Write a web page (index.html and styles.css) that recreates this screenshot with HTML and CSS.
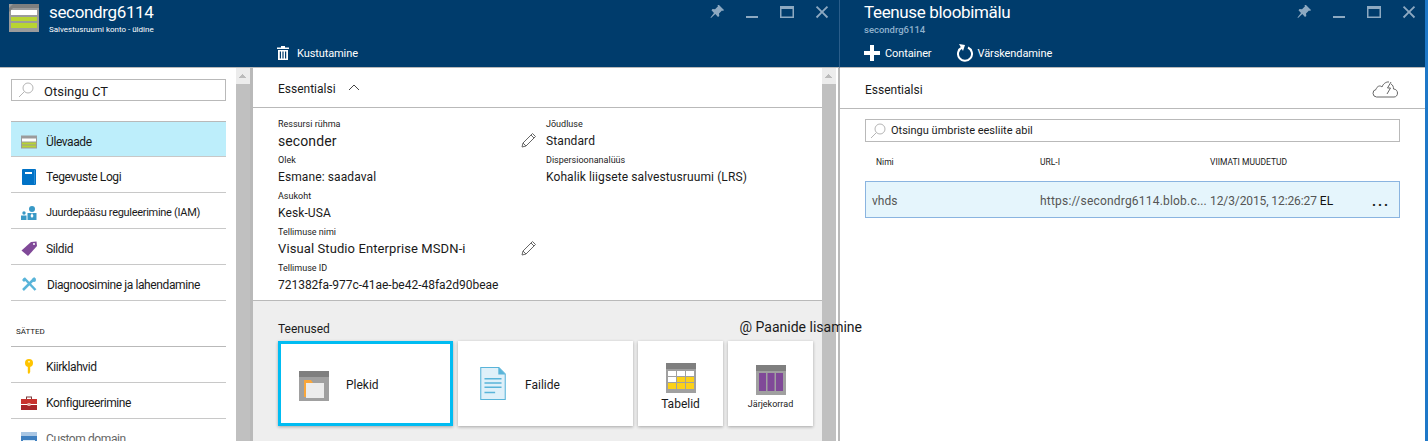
FILE: index.html
```html
<!DOCTYPE html>
<html lang="et">
<head>
    <meta charset="UTF-8">
    <title>secondrg6114</title>
    <link rel="stylesheet" href="styles.css">
</head>
<body>
<div class="portal">

    <!-- vasak paan: salvestusruumi konto -->
    <section class="blade blade-account">
        <header class="blade-header">
            <div class="title-row">
                <svg class="account-logo" viewBox="0 0 30 28">
                    <rect width="30" height="28" fill="#9b9b9b"/>
                    <path d="M30 0v4H4L0 8V4l4-4z" fill="#7f7f7f"/>
                    <rect x="2" y="6" width="26" height="5" fill="#fff"/>
                    <rect x="2" y="13" width="26" height="4" fill="#b8d432"/>
                    <rect x="2" y="19" width="26" height="5" fill="#b8d432"/>
                </svg>
                <div class="title-text">
                    <h1>secondrg6114</h1>
                    <div class="subtitle">Salvestusruumi konto - üldine</div>
                </div>
                <div class="window-icons">
                    <svg viewBox="0 0 14 14"><path d="M9 0l5 5-1 1-1-.5-3 3 .3 2.5-1.3 1-2.7-3L1 13l-.5-.5L4 8 1.500 5.300l1-1.300 2.500.3 3-3L7.500 0z"/></svg>
                    <svg viewBox="0 0 14 14"><rect x="1" y="11" width="12" height="2"/></svg>
                    <svg viewBox="0 0 14 14"><path d="M0 1h14v12H0zm1.500 3v7.500h11V4z" fill-rule="evenodd"/></svg>
                    <svg viewBox="-1 -1 16 16"><path d="M1.500 0L7 5.500 12.500 0 14 1.500 8.500 7l5.500 5.500-1.500 1.500L7 8.500 1.500 14 0 12.500 5.500 7 0 1.500z"/></svg>
                </div>
            </div>
            <div class="commands commands-account">
                <div class="command">
                    <svg class="icon-trash" viewBox="0 0 12 14"><path d="M4 0h4v1.500h4v1.500H0V1.500h4zM1 4h10v10H1zm1.800 1.500v7h1.200v-7zm2.600 0v7h1.200v-7zm2.600 0v7h1.200v-7z" fill-rule="evenodd"/></svg>
                    <span>Kustutamine</span>
                </div>
            </div>
        </header>
        <div class="blade-body">
            <nav class="side-menu">
                <div class="search-box search-menu">
                    <svg class="search-icon" viewBox="0 0 16 16"><circle cx="10" cy="6" r="5"/><path d="M6.500 9.500L1 15"/></svg>
                    <span>Otsingu CT</span>
                </div>
                <ul class="menu-list">
                    <li class="menu-item active">
                        <svg viewBox="0 0 16 13"><rect width="16" height="13" fill="#9b9b9b"/><rect x="1" y="3" width="14" height="3" fill="#fff"/><rect x="1" y="7" width="14" height="2" fill="#b8d432"/><rect x="1" y="10" width="14" height="2" fill="#b8d432"/></svg>
                        <span>Ülevaade</span>
                    </li>
                    <li class="menu-item">
                        <svg viewBox="0 0 16 16"><rect x="1" width="14" height="16" rx="1" fill="#0072c6"/><rect x="4" y="3" width="7" height="2" fill="#fff"/><rect x="13" y="1" width="1" height="14" fill="#2a8fd8"/></svg>
                        <span>Tegevuste Logi</span>
                    </li>
                    <li class="menu-item">
                        <svg viewBox="0 0 16 16"><circle cx="11" cy="4" r="3" fill="#3999c6"/><path d="M6.500 8h9v7h-9z" fill="#3999c6"/><circle cx="3" cy="8" r="1.700" fill="#3999c6"/><path d="M0 10.500h5.500V15H0z" fill="#3999c6"/><path d="M11 8l-1.500 3 1.500 2 1.500-2z" fill="#fff"/></svg>
                        <span class="menu-tight">Juurdepääsu reguleerimine (IAM)</span>
                    </li>
                    <li class="menu-item">
                        <svg viewBox="0 0 16 16"><path d="M10 1l5.500-.500L16 5 7 15 .500 9.500z" fill="#804998"/><circle cx="13" cy="3" r="1" fill="#fff"/></svg>
                        <span>Sildid</span>
                    </li>
                    <li class="menu-item">
                        <svg viewBox="0 0 16 16"><path d="M3 1l11.500 12" stroke="#59b4d9" stroke-width="2.500" fill="none"/><path d="M14 1L2 13" stroke="#59b4d9" stroke-width="2.500" fill="none"/><path d="M1 3l2-2 2 2-2 2z" fill="#59b4d9"/><circle cx="13" cy="3" r="2" fill="#59b4d9"/></svg>
                        <span class="menu-shift">Diagnoosimine ja lahendamine</span>
                    </li>
                </ul>
                <div class="menu-heading">SÄTTED</div>
                <ul class="menu-list">
                    <li class="menu-item">
                        <svg viewBox="0 0 16 16"><circle cx="8" cy="4" r="4" fill="#ffc400"/><path d="M6.800 7h2.400v6L8 15l-1.200-1z" fill="#ffc400"/><rect x="7" y="2" width="2" height="1.500" fill="#fff2a8"/></svg>
                        <span>Kiirklahvid</span>
                    </li>
                    <li class="menu-item">
                        <svg viewBox="0 0 16 16"><path d="M5 4V1.500h6V4h-1V2.500H6V4z" fill="#7a3b3b"/><rect y="4" width="16" height="5" fill="#c8322e"/><rect y="10" width="16" height="5" fill="#a8262a"/><rect x="6.500" y="8" width="3" height="3" fill="#e8b0a8"/></svg>
                        <span>Konfigureerimine</span>
                    </li>
                    <li class="menu-item">
                        <svg viewBox="0 0 16 16"><rect y="1" width="16" height="14" fill="#3f7fbf"/><rect y="1" width="16" height="4" fill="#a9c6e3"/><rect x="2" y="9" width="12" height="2" fill="#dcebf7"/></svg>
                        <span class="menu-muted">Custom domain</span>
                    </li>
                </ul>
            </nav>
            <div class="scrollbar"><div class="scroll-up"></div><div class="scroll-thumb"></div></div>
            <main class="overview">
                <div class="essentials-head">
                    <span>Essentialsi</span>
                    <svg class="chevron" viewBox="0 0 12 7"><path d="M1 6l5-5 5 5"/></svg>
                </div>
                <div class="essentials">
                    <div class="essentials-col col-left">
                        <div class="field"><label>Ressursi rühma</label><div class="value value-large">seconder</div><svg class="pencil" viewBox="0 0 16 16"><path d="M11.500 1.500l3 3-9.500 9.500-4 1 1-4zM10 3l3 3M2 11l3 3"/></svg></div>
                        <div class="field"><label>Olek</label><div class="value">Esmane: saadaval</div></div>
                        <div class="field"><label>Asukoht</label><div class="value">Kesk-USA</div></div>
                        <div class="field"><label>Tellimuse nimi</label><div class="value value-wide">Visual Studio Enterprise MSDN-i</div><svg class="pencil" viewBox="0 0 16 16"><path d="M11.500 1.500l3 3-9.500 9.500-4 1 1-4zM10 3l3 3M2 11l3 3"/></svg></div>
                        <div class="field"><label>Tellimuse ID</label><div class="value value-id">721382fa-977c-41ae-be42-48fa2d90beae</div></div>
                    </div>
                    <div class="essentials-col">
                        <div class="field"><label>Jõudluse</label><div class="value">Standard</div></div>
                        <div class="field"><label>Dispersioonanalüüs</label><div class="value">Kohalik liigsete salvestusruumi (LRS)</div></div>
                    </div>
                </div>
                <div class="services">
                    <div class="services-head">
                        <span>Teenused</span>
                        <span class="add-tiles">@ Paanide lisamine</span>
                    </div>
                    <div class="tiles">
                        <div class="tile tile-wide tile-selected">
                            <svg class="tile-icon" viewBox="0 0 30 30">
                                <rect width="30" height="30" fill="#a0a0a0"/>
                                <rect width="30" height="6" fill="#7f7f7f"/>
                                <path d="M5 9h7l2 3h10v14H5z" fill="#f9a63a"/>
                                <rect x="7" y="12" width="18" height="15" fill="#ececec"/>
                            </svg>
                            <span>Plekid</span>
                        </div>
                        <div class="tile tile-wide tile-files">
                            <svg class="tile-icon" viewBox="0 0 24 31">
                                <path d="M.500.500h17l6 6v24H.500z" fill="#dff0f9" stroke="#59b4d9"/>
                                <path d="M17 .500l6.500 6.500H17z" fill="#59b4d9"/>
                                <path d="M4 11h16M4 15h16M4 19h16M4 24h10" stroke="#59b4d9" stroke-width="1.500"/>
                            </svg>
                            <span>Failide</span>
                        </div>
                        <div class="tile tile-small">
                            <svg class="tile-icon" viewBox="0 0 30 30">
                                <rect width="30" height="30" fill="#a0a0a0"/>
                                <rect width="30" height="6" fill="#7f7f7f"/>
                                <path d="M2 8h8v5H2zm9 0h8v5h-8zm9 0h8v5h-8zM2 14h8v5H2z" fill="#fff"/>
                                <path d="M11 14h8v5h-8zm9 0h8v5h-8zM2 20h8v6H2zm9 0h8v6h-8zm9 0h8v6h-8z" fill="#fcd116"/>
                            </svg>
                            <span>Tabelid</span>
                        </div>
                        <div class="tile tile-small tile-queue">
                            <svg class="tile-icon" viewBox="0 0 30 30">
                                <rect width="30" height="30" fill="#a0a0a0"/>
                                <rect width="30" height="6" fill="#7f7f7f"/>
                                <path d="M3 8h7v18H3zm8.500 0h7v18h-7zM20 8h7v18h-7z" fill="#804998"/>
                            </svg>
                            <span>Järjekorrad</span>
                        </div>
                    </div>
                </div>
            </main>
            <div class="scrollbar scrollbar-right"><div class="scroll-up"></div><div class="scroll-thumb"></div></div>
        </div>
    </section>

    <!-- parem paan: teenuse bloobimälu -->
    <section class="blade blade-blob">
        <header class="blade-header">
            <div class="title-row">
                <div class="title-text">
                    <h2>Teenuse bloobimälu</h2>
                    <div class="subtitle-muted">secondrg6114</div>
                </div>
                <div class="window-icons">
                    <svg viewBox="0 0 14 14"><path d="M9 0l5 5-1 1-1-.5-3 3 .3 2.500-1.300 1-2.700-3L1 13l-.5-.5L4 8 1.500 5.300l1-1.300 2.500.3 3-3L7.500 0z"/></svg>
                    <svg viewBox="0 0 14 14"><rect x="1" y="11" width="12" height="2"/></svg>
                    <svg viewBox="0 0 14 14"><path d="M0 1h14v12H0zm1.500 3v7.500h11V4z" fill-rule="evenodd"/></svg>
                    <svg viewBox="-1 -1 16 16"><path d="M1.500 0L7 5.500 12.500 0 14 1.500 8.500 7l5.500 5.500-1.500 1.500L7 8.500 1.500 14 0 12.500 5.500 7 0 1.500z"/></svg>
                </div>
            </div>
            <div class="commands commands-blob">
                <div class="command">
                    <svg class="icon-plus" viewBox="0 0 16 16"><path d="M6 0h4v6h6v4h-6v6H6v-6H0V6h6z"/></svg>
                    <span>Container</span>
                </div>
                <div class="command">
                    <svg class="icon-refresh" viewBox="0 0 16 18"><path d="M5 3.500a7 7 0 1 0 6 0" fill="none" stroke="#fff" stroke-width="2"/><path d="M2 0l6 1-2 6z"/></svg>
                    <span>Värskendamine</span>
                </div>
            </div>
        </header>
        <div class="blob-body">
            <div class="blob-essentials">
                <span>Essentialsi</span>
                <svg class="cloud" viewBox="0 0 26 17"><path d="M7 16H4.500a3.800 3.800 0 0 1-.5-7.500C5 5 8 4 10 6c1-3 4-5.500 7-5M19 3c2 1 2.500 3 2.500 5 2.500 0 4 2 4 4 0 2.500-1.500 4-3.500 4H7"/><path d="M19 1l-3.500 6h3L15 13"/></svg>
            </div>
            <div class="blob-content">
                <div class="search-box search-blob">
                    <svg class="search-icon" viewBox="0 0 16 16"><circle cx="10" cy="6" r="5"/><path d="M6.500 9.500L1 15"/></svg>
                    <span>Otsingu ümbriste eesliite abil</span>
                </div>
                <div class="blob-grid blob-columns">
                    <span class="col-name">Nimi</span>
                    <span>URL-I</span>
                    <span>VIIMATI MUUDETUD</span>
                </div>
                <div class="blob-grid blob-row">
                    <span class="row-muted">vhds</span>
                    <span class="row-muted row-url">https://secondrg6114.blob.c...</span>
                    <span><span class="row-muted row-date">12/3/2015, 12:26:27</span> <span class="row-zone">EL</span></span>
                    <span class="row-more">...</span>
                </div>
            </div>
        </div>
    </section>

    <div class="screen-edge"></div>
</div>
</body>
</html>
```

FILE: styles.css
```css
:root {
    --header-bg: #003c6c;
    --line: #b9b9b9;
    --text: #1a1a1a;
    --thumb: #c0c0c0;
}

* {
    box-sizing: border-box;
    margin: 0;
    padding: 0;
}

html, body {
    height: 441px;
    overflow: hidden;
}

body {
    font-family: Roboto, sans-serif;
    font-size: 12px;
    color: var(--text);
    background: #fff;
}

ul {
    list-style: none;
}

.portal {
    display: flex;
    height: 441px;
    overflow: hidden;
}

.blade {
    display: flex;
    flex-direction: column;
    height: 441px;
}

.blade-account {
    width: 840px;
    flex: none;
}

.blade-blob {
    width: 585px;
    flex: none;
}

.screen-edge {
    flex: 1;
    background: #1e78c8;
}

.blade-header {
    height: 68px;
    flex: none;
    background: var(--header-bg);
    border-bottom: 1px solid var(--line);
    color: #fff;
}

.blade-account .blade-header {
    border-right: 1px solid #2a5d8a;
}

.title-row {
    display: flex;
    height: 41px;
}

.account-logo {
    width: 30px;
    height: 28px;
    margin: 4px 0 0 9px;
}

.blade-account .title-text {
    margin-left: 10px;
}

.blade-blob .title-text {
    margin-left: 24px;
}

h1, h2 {
    font-size: 17px;
    font-weight: 400;
    line-height: 24px;
    letter-spacing: -0.35px;
}

.subtitle {
    font-size: 8px;
    line-height: 10px;
    margin-top: 1px;
}

.subtitle-muted {
    font-size: 9.5px;
    line-height: 12px;
    font-weight: 500;
    color: #8fb1cc;
}

.window-icons {
    display: flex;
    gap: 21px;
    margin: 5px 10px 0 auto;
}

.blade-blob .window-icons {
    margin-right: 9px;
}

.window-icons svg {
    width: 14px;
    height: 14px;
    fill: #8da9c1;
}

.commands {
    display: flex;
    align-items: center;
    height: 24px;
}

.commands-account {
    padding-left: 277px;
}

.commands-blob {
    padding-left: 24px;
    gap: 25px;
}

.command {
    display: flex;
    align-items: center;
    gap: 5px;
    font-size: 11px;
    letter-spacing: -0.1px;
}

.command span {
    margin-top: 1px;
}

.icon-trash {
    width: 12px;
    height: 14px;
    fill: #fff;
    margin-right: 3px;
}

.icon-plus {
    width: 16px;
    height: 16px;
    fill: #fff;
}

.icon-refresh {
    width: 16px;
    height: 18px;
    fill: #fff;
}

.blade-body {
    flex: 1;
    display: flex;
    min-height: 0;
    border-right: 2px solid var(--line);
}

.side-menu {
    width: 236px;
    flex: none;
    padding: 11px 10px 0 11px;
}

.search-box {
    display: flex;
    align-items: center;
    border: 1px solid var(--line);
    background: #fff;
}

.search-menu {
    height: 22px;
    gap: 10px;
    padding-left: 6px;
    font-size: 13px;
    margin-bottom: 20px;
}

.search-menu span {
    margin-top: 3px;
}

.search-icon {
    width: 16px;
    height: 16px;
    fill: none;
    stroke: #b5b5b5;
    stroke-width: 1;
}

.menu-list {
    border-top: 1px solid var(--line);
}

.menu-item {
    display: flex;
    align-items: center;
    gap: 9px;
    height: 36px;
    padding: 4px 0 0 10px;
    border-bottom: 1px solid #c8c8c8;
    font-size: 12px;
    letter-spacing: -0.4px;
    white-space: nowrap;
}

.menu-item svg {
    width: 16px;
    height: 16px;
    flex: none;
}

.menu-item.active {
    height: 35px;
    padding-top: 5px;
    background: #bdeefb;
}

.menu-tight {
    font-size: 11px;
    letter-spacing: -0.3px;
}

.menu-shift {
    margin-left: 1px;
}

.menu-muted {
    color: #666;
}

.menu-heading {
    font-size: 8px;
    line-height: 10px;
    padding: 26px 0 9px 5px;
}

.scrollbar {
    width: 14px;
    flex: none;
    background: #ececec;
    display: flex;
    flex-direction: column;
}

.scroll-up {
    height: 16px;
    flex: none;
    background: linear-gradient(135deg, transparent 50%, #bbb 50%) no-repeat 3px 6px / 4px 4px,
        linear-gradient(225deg, transparent 50%, #bbb 50%) no-repeat 7px 6px / 4px 4px;
}

.scroll-thumb {
    flex: 1;
    background: var(--thumb);
}

.scrollbar-right {
    margin-right: 2px;
}

.overview {
    width: 572px;
    flex: none;
    border-left: 3px solid var(--line);
    display: flex;
    flex-direction: column;
}

.essentials-head {
    display: flex;
    align-items: center;
    gap: 12px;
    height: 40px;
    padding: 3px 0 0 25px;
    border-bottom: 1px solid var(--line);
    font-size: 12px;
}

.chevron {
    width: 12px;
    height: 7px;
    fill: none;
    stroke: #444;
    margin-top: -4px;
}

.essentials {
    display: flex;
    height: 193px;
    border-bottom: 1px solid var(--line);
    padding-top: 9px;
}

.essentials-col {
    flex: none;
}

.col-left {
    width: 293px;
    padding-left: 25px;
}

.field {
    position: relative;
    height: 36px;
}

.field label {
    display: block;
    font-size: 9px;
    line-height: 14px;
}

.value {
    font-size: 12px;
    line-height: 20px;
    letter-spacing: 0.1px;
    white-space: nowrap;
}

.value-large {
    font-size: 14px;
}

.value-wide {
    font-size: 13px;
}

.value-id {
    letter-spacing: -0.02px;
}

.pencil {
    position: absolute;
    left: 243px;
    top: 15px;
    width: 16px;
    height: 16px;
    fill: none;
    stroke: #666;
}

.services {
    flex: 1;
    background: #eee;
    padding: 20px 0 0 25px;
}

.services-head {
    display: flex;
    justify-content: space-between;
    height: 20px;
    line-height: 16px;
    white-space: nowrap;
}

.add-tiles {
    position: relative;
    z-index: 2;
    font-size: 14px;
    margin: -2px -40px 0 0;
}

.tiles {
    display: flex;
    gap: 5px;
    width: 536px;
    height: 85px;
}

.tile {
    background: #fff;
    box-shadow: 0 1px 3px rgba(0, 0, 0, 0.3);
    display: flex;
    align-items: center;
}

.tile-wide {
    width: 175px;
    flex: none;
    padding-left: 20px;
    gap: 17px;
}

.tile-wide span {
    margin-top: 3px;
}

.tile-selected {
    border: 3px solid #00bcf2;
    padding-left: 18px;
}

.tile-selected .tile-icon {
    margin-top: 4px;
}

.tile-files {
    padding-left: 22px;
    gap: 19px;
}

.tile-small {
    width: 85px;
    flex: none;
    flex-direction: column;
    justify-content: center;
    gap: 4px;
    padding-top: 6px;
}

.tile-icon {
    width: 30px;
    height: 30px;
    flex: none;
}

.tile-files .tile-icon {
    width: 26px;
    height: 33px;
}

.tile-queue span {
    font-size: 9px;
}

.blob-body {
    flex: 1;
    min-height: 0;
}

.blob-essentials {
    display: flex;
    align-items: center;
    justify-content: space-between;
    height: 41px;
    padding: 3px 27px 0 25px;
    border-bottom: 1px solid var(--line);
}

.cloud {
    width: 26px;
    height: 17px;
    fill: none;
    stroke: #666;
}

.blob-content {
    padding: 10px 0 0 25px;
}

.search-blob {
    width: 535px;
    height: 23px;
    gap: 5px;
    padding-left: 4px;
    font-size: 11px;
}

.blob-grid {
    display: grid;
    grid-template-columns: 175px 170px 1fr 27px;
    width: 535px;
    align-items: center;
}

.blob-columns {
    height: 39px;
    font-size: 8.5px;
    padding-top: 1px;
}

.col-name {
    padding-left: 11px;
}

.blob-row {
    height: 37px;
    background: #e5f5fc;
    border: 1px solid #8ab4e0;
    font-size: 12px;
    padding: 3px 0 0 6px;
    grid-template-columns: 168px 170px 1fr 27px;
}

.row-muted {
    color: #555;
}

.row-url {
    letter-spacing: 0.2px;
}

.row-date {
    letter-spacing: -0.1px;
}

.row-zone {
    color: #111;
}

.row-more {
    font-size: 14px;
    font-weight: 700;
    line-height: 14px;
    letter-spacing: 2px;
    white-space: nowrap;
}
```
